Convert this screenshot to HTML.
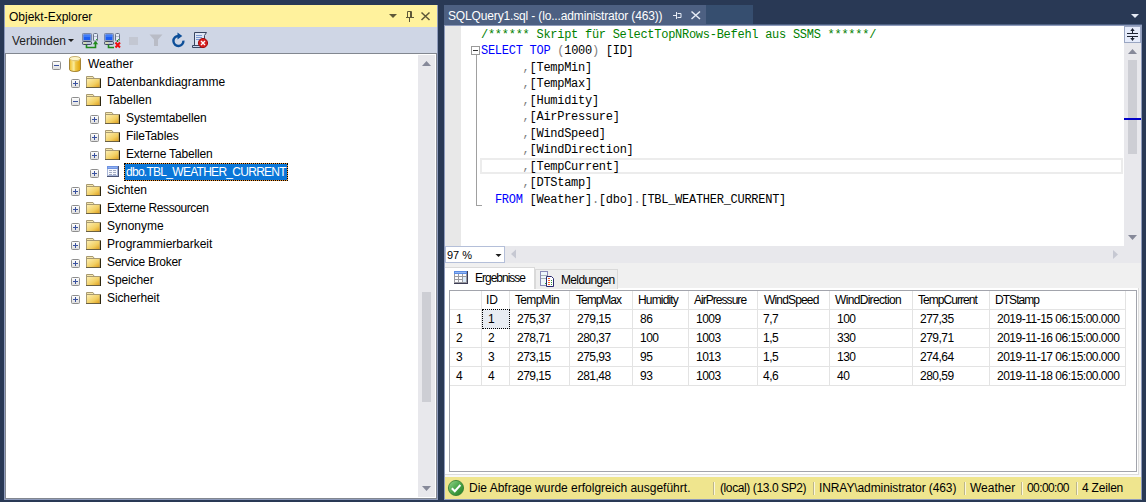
<!DOCTYPE html>
<html><head><meta charset="utf-8">
<style>
*{margin:0;padding:0;box-sizing:border-box}
html,body{width:1146px;height:502px;overflow:hidden;background:#293955;font-family:"Liberation Sans",sans-serif;font-size:12px;color:#000}
.a{position:absolute}
svg.a{overflow:visible}
.t{position:absolute;white-space:nowrap;line-height:14px}
.tr{position:absolute;height:18px;line-height:18px;white-space:nowrap;color:#000}
.code{position:absolute;font-family:"Liberation Mono",monospace;font-size:12px;letter-spacing:-0.27px;line-height:16.5px;white-space:pre;color:#000}
.cm{color:#008000}.kw{color:#0000ff}.gr{color:#808080}
.g{position:absolute;font-size:12px;line-height:13px;white-space:nowrap;color:#000}
.st{position:absolute;top:482px;line-height:12px;white-space:nowrap;color:#000}
.sep{position:absolute;top:482px;width:2px;height:13px;border-left:1px solid #bdb68a;border-right:1px solid #fbf7dc}
</style></head>
<body>
<svg width="0" height="0" style="position:absolute">
<defs>
<linearGradient id="gbox" x1="0" y1="0" x2="0" y2="1"><stop offset="0" stop-color="#ffffff"/><stop offset="1" stop-color="#dcdcdc"/></linearGradient>
<linearGradient id="gfold" x1="0" y1="0" x2="1" y2="1"><stop offset="0" stop-color="#fdf1b8"/><stop offset="0.6" stop-color="#f2cf62"/><stop offset="1" stop-color="#dc9a18"/></linearGradient>
<linearGradient id="gdb" x1="0" y1="0" x2="1" y2="0"><stop offset="0" stop-color="#eebc28"/><stop offset="0.4" stop-color="#fbeea0"/><stop offset="0.55" stop-color="#f0c848"/><stop offset="1" stop-color="#e0a208"/></linearGradient>
<linearGradient id="gchk" x1="0" y1="0" x2="1" y2="1"><stop offset="0" stop-color="#9ad68e"/><stop offset="0.5" stop-color="#4aa64a"/><stop offset="1" stop-color="#237a23"/></linearGradient>
<linearGradient id="gscr" x1="0" y1="0" x2="1" y2="0"><stop offset="0" stop-color="#2a6ee8"/><stop offset="1" stop-color="#1a4fc8"/></linearGradient>
<symbol id="plus" viewBox="0 0 9 9"><rect x="0.5" y="0.5" width="8" height="8" rx="1" fill="url(#gbox)" stroke="#8e8e8e"/><rect x="2" y="4" width="5" height="1" fill="#3a52a0"/><rect x="4" y="2" width="1" height="5" fill="#3a52a0"/></symbol>
<symbol id="minus" viewBox="0 0 9 9"><rect x="0.5" y="0.5" width="8" height="8" rx="1" fill="url(#gbox)" stroke="#8e8e8e"/><rect x="2" y="4" width="5" height="1" fill="#3a52a0"/></symbol>
<symbol id="folder" viewBox="0 0 15 12"><path d="M0.5 2V0.5h6.5l1 1.5" fill="#f7e9ad" stroke="#a89a72"/><rect x="0.5" y="2.5" width="13.5" height="9" fill="url(#gfold)" stroke="#a89a72"/><path d="M14.5 2.5v9.5h-14.5" fill="none" stroke="#2e2710"/></symbol>
<symbol id="db" viewBox="0 0 12 16"><path d="M0.5 2.5v11a5.5 2 0 0 0 11 0v-11" fill="url(#gdb)" stroke="#9c7a2a" stroke-width="0.9"/><ellipse cx="6" cy="2.6" rx="5.5" ry="2.1" fill="#fdf5c8" stroke="#b09040" stroke-width="0.7"/><path d="M1 3.2a5 1.8 0 0 0 10 0" fill="none" stroke="#f3dc88" stroke-width="0.8"/></symbol>
<symbol id="table" viewBox="0 0 12 11"><rect x="0" y="0" width="12" height="11" fill="#4c5574"/><rect x="0" y="0" width="11" height="10" fill="#a8b6d8"/><rect x="0" y="0" width="11" height="3" fill="#6e92e2"/><rect x="1" y="1" width="9" height="1" fill="#8fb0f0"/><rect x="1" y="3" width="9" height="6" fill="#f6f8fd"/><path d="M2 4.5h3M6 4.5h3M2 6.5h3M6 6.5h3M2 8.5h3M6 8.5h3" stroke="#a2abc2"/></symbol>
<symbol id="pc" viewBox="0 0 16 12"><rect x="0.5" y="0.5" width="9" height="7.5" rx="0.8" fill="#a9b9d8" stroke="#7d8aa8"/><rect x="1.5" y="1.5" width="7" height="5.5" fill="#1d5ef2"/><rect x="2" y="2" width="6" height="2" fill="#3f7cf8"/><rect x="0.5" y="8.5" width="9" height="3" rx="1" fill="#b9c3d6" stroke="#3e4860"/><rect x="1.5" y="9.5" width="3" height="1" fill="#eef08a"/><rect x="11.5" y="0.5" width="4" height="7.5" rx="1" fill="#e2eaf6" stroke="#687288"/><rect x="12" y="3" width="3" height="1" fill="#b4bccc"/><rect x="14" y="6" width="1" height="1" fill="#34b034"/></symbol>
</defs></svg>
<div class="a" style="left:4px;top:5px;width:434px;height:495px;background:#8e9bbc"></div>
<div class="a" style="left:5px;top:5px;width:432px;height:22px;background:#fff29d"></div>
<div class="t" style="left:9px;top:10px">Objekt-Explorer</div>
<svg class="a" style="left:380px;top:5px" width="57" height="22"><path d="M9 9h8l-4 4z" fill="#5e5838"/><path d="M27.5 6.5h4v6h-4z" fill="none" stroke="#5e5838"/><path d="M30.5 6.5v6" stroke="#5e5838" stroke-width="1"/><rect x="26" y="12" width="8" height="1" fill="#5e5838"/><rect x="29" y="12" width="1" height="5" fill="#5e5838"/><path d="M41.5 7.5l8 7.5M49.5 7.5l-8 7.5" stroke="#5e5838" stroke-width="1.5"/></svg>
<div class="a" style="left:5px;top:27px;width:432px;height:26px;background:#cfd6e5"></div>
<div class="t" style="left:12px;top:34px;color:#1e1e1e">Verbinden</div>
<svg class="a" style="left:60px;top:27px" width="160" height="26"><path d="M8 12h6l-3 3z" fill="#1e1e1e"/><use href="#pc" x="22" y="6" width="16" height="12"/><path d="M26.5 18v2.5h9v-5.5" fill="none" stroke="#1f8a1a" stroke-width="1.6"/><path d="M32.8 17.2h5.4l-2.7-3.2z" fill="#1f8a1a"/><use href="#pc" x="44" y="6" width="16" height="12"/><path d="M48.5 18v2.5h5.5" fill="none" stroke="#1f8a1a" stroke-width="1.6"/><rect x="57" y="13" width="1" height="2" fill="#1f8a1a"/><path d="M55.5 15.5l4.5 5M60 15.5l-4.5 5" stroke="#ee1010" stroke-width="2"/><rect x="69" y="10" width="9" height="8" fill="#c3c7d2"/><path d="M89.5 7.5h13l-4.5 5v6.5h-4v-6.5z" fill="#b9bcc6"/><path d="M118.5 9a5 5 0 1 0 4.9 4.6" fill="none" stroke="#0d4e98" stroke-width="2.4"/><path d="M117.5 5.5l4.8 3.6-4.8 3.4z" fill="#0d4e98"/><path d="M134.5 5.5h12l-2 3v10h-10z" fill="#dfe6f4" stroke="#3a4660"/><path d="M132.5 18.5h10v2h-10z" fill="#c8d4ec" stroke="#3a4660"/><path d="M136 8.5h6M136 10.5h6M136 12.5h5" stroke="#7a98d0"/><circle cx="143" cy="16" r="4.6" fill="#d81e1e" stroke="#a01010"/><path d="M141 14l4 4M145 14l-4 4" stroke="#fff" stroke-width="1.4"/></svg>
<div class="a" style="left:5px;top:53px;width:432px;height:446px;background:#fff;border:1px solid #828790"></div>
<svg class="a" style="left:52px;top:61px" width="9" height="9"><use href="#minus"/></svg>
<svg class="a" style="left:69px;top:56px" width="12" height="16"><use href="#db"/></svg>
<div class="tr" style="left:88px;top:55px;">Weather</div>
<svg class="a" style="left:71px;top:79px" width="9" height="9"><use href="#plus"/></svg>
<svg class="a" style="left:86px;top:76px" width="15" height="12"><use href="#folder"/></svg>
<div class="tr" style="left:107px;top:73px;">Datenbankdiagramme</div>
<svg class="a" style="left:71px;top:97px" width="9" height="9"><use href="#minus"/></svg>
<svg class="a" style="left:86px;top:94px" width="15" height="12"><use href="#folder"/></svg>
<div class="tr" style="left:107px;top:91px;">Tabellen</div>
<svg class="a" style="left:90px;top:115px" width="9" height="9"><use href="#plus"/></svg>
<svg class="a" style="left:105px;top:112px" width="15" height="12"><use href="#folder"/></svg>
<div class="tr" style="left:126px;top:109px;letter-spacing:-0.1px;">Systemtabellen</div>
<svg class="a" style="left:90px;top:133px" width="9" height="9"><use href="#plus"/></svg>
<svg class="a" style="left:105px;top:130px" width="15" height="12"><use href="#folder"/></svg>
<div class="tr" style="left:126px;top:127px;letter-spacing:-0.15px;">FileTables</div>
<svg class="a" style="left:90px;top:151px" width="9" height="9"><use href="#plus"/></svg>
<svg class="a" style="left:105px;top:148px" width="15" height="12"><use href="#folder"/></svg>
<div class="tr" style="left:126px;top:145px;letter-spacing:-0.17px;">Externe Tabellen</div>
<svg class="a" style="left:90px;top:169px" width="9" height="9"><use href="#plus"/></svg>
<svg class="a" style="left:107px;top:166px" width="12" height="11"><use href="#table"/></svg>
<div class="a" style="left:124px;top:163px;width:164px;height:18px;background:linear-gradient(#0a76d8,#0a76d8) padding-box,linear-gradient(#f29a3a,#f29a3a) border-box;border:1px dotted #000"></div>
<div class="tr" style="left:126px;top:163px;color:#fff;letter-spacing:-0.72px;">dbo.TBL_WEATHER_CURRENT</div>
<svg class="a" style="left:71px;top:187px" width="9" height="9"><use href="#plus"/></svg>
<svg class="a" style="left:86px;top:184px" width="15" height="12"><use href="#folder"/></svg>
<div class="tr" style="left:107px;top:181px;">Sichten</div>
<svg class="a" style="left:71px;top:205px" width="9" height="9"><use href="#plus"/></svg>
<svg class="a" style="left:86px;top:202px" width="15" height="12"><use href="#folder"/></svg>
<div class="tr" style="left:107px;top:199px;letter-spacing:-0.4px;">Externe Ressourcen</div>
<svg class="a" style="left:71px;top:223px" width="9" height="9"><use href="#plus"/></svg>
<svg class="a" style="left:86px;top:220px" width="15" height="12"><use href="#folder"/></svg>
<div class="tr" style="left:107px;top:217px;">Synonyme</div>
<svg class="a" style="left:71px;top:241px" width="9" height="9"><use href="#plus"/></svg>
<svg class="a" style="left:86px;top:238px" width="15" height="12"><use href="#folder"/></svg>
<div class="tr" style="left:107px;top:235px;">Programmierbarkeit</div>
<svg class="a" style="left:71px;top:259px" width="9" height="9"><use href="#plus"/></svg>
<svg class="a" style="left:86px;top:256px" width="15" height="12"><use href="#folder"/></svg>
<div class="tr" style="left:107px;top:253px;letter-spacing:-0.3px;">Service Broker</div>
<svg class="a" style="left:71px;top:277px" width="9" height="9"><use href="#plus"/></svg>
<svg class="a" style="left:86px;top:274px" width="15" height="12"><use href="#folder"/></svg>
<div class="tr" style="left:107px;top:271px;letter-spacing:-0.1px;">Speicher</div>
<svg class="a" style="left:71px;top:295px" width="9" height="9"><use href="#plus"/></svg>
<svg class="a" style="left:86px;top:292px" width="15" height="12"><use href="#folder"/></svg>
<div class="tr" style="left:107px;top:289px;letter-spacing:-0.1px;">Sicherheit</div>
<div class="a" style="left:418px;top:55px;width:17px;height:442px;background:#e8e8ec"></div>
<div class="a" style="left:422px;top:292px;width:9px;height:110px;background:#cdced4"></div>
<svg class="a" style="left:418px;top:55px" width="17" height="442"><path d="M4 11h9l-4.5-5z" fill="#868999"/><path d="M4 431h9l-4.5 5z" fill="#868999"/></svg>
<div class="a" style="left:444px;top:5px;width:262px;height:20px;background:#4d6082"></div>
<div class="a" style="left:706px;top:5px;width:47px;height:19px;background:#364e6f"></div>
<div class="t" style="left:448px;top:9px;color:#fff;letter-spacing:-0.15px">SQLQuery1.sql - (lo...administrator (463))</div>
<svg class="a" style="left:670px;top:8px" width="36" height="14"><path d="M3 7.5h3.5" stroke="#e6ebf5" stroke-width="1"/><rect x="6" y="4" width="1" height="7" fill="#e6ebf5"/><path d="M7.5 5.5h3.5v4h-3.5" fill="none" stroke="#e6ebf5"/><path d="M21.5 3.5l8.5 7.5M30 3.5l-8.5 7.5" stroke="#e6ebf5" stroke-width="1.5"/></svg>
<svg class="a" style="left:1126px;top:8px" width="16" height="14"><path d="M5 6h8l-4 4z" fill="#e6ebf5"/></svg>
<div class="a" style="left:444px;top:24px;width:698px;height:2px;background:#4d6082"></div>
<div class="a" style="left:444px;top:25px;width:698px;height:475px;background:#8e9bbc"></div>
<div class="a" style="left:445px;top:26px;width:696px;height:220px;background:#fff"></div>
<div class="a" style="left:445px;top:26px;width:16px;height:220px;background:#e8e8e8"></div>
<div class="a" style="left:480px;top:158px;width:643px;height:16px;border:2px solid #ececec"></div>
<svg class="a" style="left:470px;top:45px" width="14" height="165"><rect x="1.5" y="1.5" width="8" height="8" fill="#fff" stroke="#9a9a9a"/><rect x="3" y="5" width="5" height="1" fill="#333"/><rect x="6" y="10" width="1" height="151" fill="#a0a0a0"/><rect x="6" y="160" width="6" height="1" fill="#a0a0a0"/></svg>
<div class="a" style="left:1124px;top:26px;width:17px;height:220px;background:#e8e8ec"></div>
<div class="a" style="left:1124px;top:26px;width:17px;height:17px;background:#e6ecfb;border:1px solid #9aa6c2"></div>
<svg class="a" style="left:1124px;top:26px" width="17" height="220"><rect x="3" y="7" width="11" height="1" fill="#1e2433"/><rect x="3" y="10" width="11" height="1" fill="#1e2433"/><rect x="8" y="4" width="1" height="3" fill="#1e2433"/><path d="M6.3 5h4.4l-2.2-3z" fill="#1e2433"/><rect x="8" y="11" width="1" height="2.5" fill="#1e2433"/><path d="M6.3 12h4.4l-2.2 3z" fill="#1e2433"/><path d="M4 28h9l-4.5-5z" fill="#868999"/><rect x="4" y="34" width="9" height="94" fill="#cdced4"/><rect x="0" y="92" width="17" height="2" fill="#0000c8"/><path d="M4 209h9l-4.5 5z" fill="#868999"/></svg>
<div class="code" style="left:481px;top:26.7px"><span class="cm">/****** Skript für SelectTopNRows-Befehl aus SSMS ******/</span>
<span class="kw">SELECT</span> <span class="kw">TOP</span> <span class="gr">(</span>1000<span class="gr">)</span> [ID]
      <span class="gr">,</span>[TempMin]
      <span class="gr">,</span>[TempMax]
      <span class="gr">,</span>[Humidity]
      <span class="gr">,</span>[AirPressure]
      <span class="gr">,</span>[WindSpeed]
      <span class="gr">,</span>[WindDirection]
      <span class="gr">,</span>[TempCurrent]
      <span class="gr">,</span>[DTStamp]
  <span class="kw">FROM</span> [Weather]<span class="gr">.</span>[dbo]<span class="gr">.</span>[TBL_WEATHER_CURRENT]</div>
<div class="a" style="left:445px;top:246px;width:696px;height:17px;background:#e8e8ec"></div>
<div class="a" style="left:445px;top:246px;width:60px;height:17px;background:#fff;border:1px solid #b4bfd9"></div>
<div class="t" style="left:447px;top:248px;font-size:11px">97 %</div>
<svg class="a" style="left:444px;top:246px" width="680" height="17"><path d="M51.5 8h6l-3 3z" fill="#1e1e1e"/><path d="M72 3.5v9l-5-4.5z" fill="#c6c8d2"/><path d="M669 4v9l5-4.5z" fill="#c6c8d2"/></svg>
<div class="a" style="left:445px;top:263px;width:696px;height:214px;background:#f0f0f0"></div>
<div class="a" style="left:445px;top:288px;width:696px;height:189px;background:#fff"></div>
<div class="a" style="left:1138px;top:288px;width:1px;height:187px;background:#dcdcdc"></div>
<div class="a" style="left:1139px;top:288px;width:2px;height:189px;background:#f4f4f4"></div>
<div class="a" style="left:445px;top:474px;width:694px;height:1px;background:#dcdcdc"></div>
<div class="a" style="left:445px;top:475px;width:696px;height:2px;background:#f8f8f8"></div>
<div class="a" style="left:445px;top:267px;width:90px;height:22px;background:#fff;border-top:1px solid #dadada;border-right:1px solid #dadada"></div>
<div class="a" style="left:535px;top:269px;width:83px;height:20px;background:#eeeeee;border:1px solid #d9d9d9;border-bottom:none"></div>
<div class="g" style="left:475px;top:272px;font-size:12px;line-height:13px;letter-spacing:-1.0px">Ergebnisse</div>
<div class="g" style="left:561px;top:274px;font-size:12px;line-height:13px;letter-spacing:-0.65px">Meldungen</div>
<svg class="a" style="left:454px;top:271px" width="14" height="13"><rect x="0" y="0" width="14" height="13" fill="#3c3c54"/><rect x="0" y="0" width="13" height="12" fill="#9a9aa0"/><rect x="0" y="0" width="13" height="3" fill="#5b8be2"/><rect x="1" y="1" width="11" height="1" fill="#92b6f2"/><path d="M1 4h3M5 4h3M9 4h3M1 7h3M5 7h3M9 7h3M1 10h3M5 10h3M9 10h3" stroke="#fbfbfd" stroke-width="2"/><rect x="9" y="6" width="3" height="5" fill="#dcecfa"/></svg>
<svg class="a" style="left:540px;top:271px" width="15" height="16"><rect x="0.5" y="0.5" width="7" height="14" fill="#eef6fb" stroke="#8a8ab8"/><path d="M1 4.5h6M1 7.5h6" stroke="#a8b0b8"/><rect x="5" y="12" width="1" height="1" fill="#3a3"/><path d="M6.5 5.5h5l2 2v8h-7z" fill="#fff" stroke="#2a2a70"/><path d="M8 7.5h2M8 9.5h2M8 11.5h2M8 13.5h2" stroke="#f4602a"/><path d="M11 9.5h1M11 11.5h1M11 13.5h1" stroke="#2f8f3a"/></svg>
<div class="a" style="left:449px;top:290px;width:688px;height:182px;border:1px solid #a2a4ac"></div>
<div class="a" style="left:481px;top:291px;width:1px;height:95px;background:#e3e3e3"></div>
<div class="a" style="left:509px;top:291px;width:1px;height:95px;background:#e3e3e3"></div>
<div class="a" style="left:569px;top:291px;width:1px;height:95px;background:#e3e3e3"></div>
<div class="a" style="left:632px;top:291px;width:1px;height:95px;background:#e3e3e3"></div>
<div class="a" style="left:688px;top:291px;width:1px;height:95px;background:#e3e3e3"></div>
<div class="a" style="left:757px;top:291px;width:1px;height:95px;background:#e3e3e3"></div>
<div class="a" style="left:829px;top:291px;width:1px;height:95px;background:#e3e3e3"></div>
<div class="a" style="left:912px;top:291px;width:1px;height:95px;background:#e3e3e3"></div>
<div class="a" style="left:989px;top:291px;width:1px;height:95px;background:#e3e3e3"></div>
<div class="a" style="left:1125px;top:291px;width:1px;height:95px;background:#e3e3e3"></div>
<div class="a" style="left:450px;top:309px;width:676px;height:1px;background:#e3e3e3"></div>
<div class="a" style="left:450px;top:328px;width:676px;height:1px;background:#e3e3e3"></div>
<div class="a" style="left:450px;top:347px;width:676px;height:1px;background:#e3e3e3"></div>
<div class="a" style="left:450px;top:366px;width:676px;height:1px;background:#e3e3e3"></div>
<div class="a" style="left:450px;top:385px;width:676px;height:1px;background:#e3e3e3"></div>
<div class="a" style="left:482px;top:309px;width:28px;height:20px;background:#e8ecf2;border:1px dotted #000"></div>
<div class="g" style="left:486px;top:294px;letter-spacing:-0.2px">ID</div>
<div class="g" style="left:515px;top:294px;letter-spacing:-0.68px">TempMin</div>
<div class="g" style="left:576px;top:294px;letter-spacing:-1.0px">TempMax</div>
<div class="g" style="left:638px;top:294px;letter-spacing:-0.84px">Humidity</div>
<div class="g" style="left:694px;top:294px;letter-spacing:-0.96px">AirPressure</div>
<div class="g" style="left:764px;top:294px;letter-spacing:-0.84px">WindSpeed</div>
<div class="g" style="left:835px;top:294px;letter-spacing:-0.675px">WindDirection</div>
<div class="g" style="left:918px;top:294px;letter-spacing:-0.95px">TempCurrent</div>
<div class="g" style="left:995px;top:294px;letter-spacing:-0.95px">DTStamp</div>
<div class="g" style="left:456px;top:313px;letter-spacing:-0.5px">1</div>
<div class="g" style="left:488px;top:313px;letter-spacing:-0.5px">1</div>
<div class="g" style="left:517px;top:313px;letter-spacing:-0.5px">275,37</div>
<div class="g" style="left:577px;top:313px;letter-spacing:-0.5px">279,15</div>
<div class="g" style="left:640px;top:313px;letter-spacing:-0.5px">86</div>
<div class="g" style="left:696px;top:313px;letter-spacing:-0.5px">1009</div>
<div class="g" style="left:763px;top:313px;letter-spacing:-0.5px">7,7</div>
<div class="g" style="left:837px;top:313px;letter-spacing:-0.5px">100</div>
<div class="g" style="left:920px;top:313px;letter-spacing:-0.5px">277,35</div>
<div class="g" style="left:997px;top:313px;letter-spacing:-0.5px">2019-11-15 06:15:00.000</div>
<div class="g" style="left:456px;top:332px;letter-spacing:-0.5px">2</div>
<div class="g" style="left:488px;top:332px;letter-spacing:-0.5px">2</div>
<div class="g" style="left:517px;top:332px;letter-spacing:-0.5px">278,71</div>
<div class="g" style="left:577px;top:332px;letter-spacing:-0.5px">280,37</div>
<div class="g" style="left:640px;top:332px;letter-spacing:-0.5px">100</div>
<div class="g" style="left:696px;top:332px;letter-spacing:-0.5px">1003</div>
<div class="g" style="left:763px;top:332px;letter-spacing:-0.5px">1,5</div>
<div class="g" style="left:837px;top:332px;letter-spacing:-0.5px">330</div>
<div class="g" style="left:920px;top:332px;letter-spacing:-0.5px">279,71</div>
<div class="g" style="left:997px;top:332px;letter-spacing:-0.5px">2019-11-16 06:15:00.000</div>
<div class="g" style="left:456px;top:351px;letter-spacing:-0.5px">3</div>
<div class="g" style="left:488px;top:351px;letter-spacing:-0.5px">3</div>
<div class="g" style="left:517px;top:351px;letter-spacing:-0.5px">273,15</div>
<div class="g" style="left:577px;top:351px;letter-spacing:-0.5px">275,93</div>
<div class="g" style="left:640px;top:351px;letter-spacing:-0.5px">95</div>
<div class="g" style="left:696px;top:351px;letter-spacing:-0.5px">1013</div>
<div class="g" style="left:763px;top:351px;letter-spacing:-0.5px">1,5</div>
<div class="g" style="left:837px;top:351px;letter-spacing:-0.5px">130</div>
<div class="g" style="left:920px;top:351px;letter-spacing:-0.5px">274,64</div>
<div class="g" style="left:997px;top:351px;letter-spacing:-0.5px">2019-11-17 06:15:00.000</div>
<div class="g" style="left:456px;top:370px;letter-spacing:-0.5px">4</div>
<div class="g" style="left:488px;top:370px;letter-spacing:-0.5px">4</div>
<div class="g" style="left:517px;top:370px;letter-spacing:-0.5px">279,15</div>
<div class="g" style="left:577px;top:370px;letter-spacing:-0.5px">281,48</div>
<div class="g" style="left:640px;top:370px;letter-spacing:-0.5px">93</div>
<div class="g" style="left:696px;top:370px;letter-spacing:-0.5px">1003</div>
<div class="g" style="left:763px;top:370px;letter-spacing:-0.5px">4,6</div>
<div class="g" style="left:837px;top:370px;letter-spacing:-0.5px">40</div>
<div class="g" style="left:920px;top:370px;letter-spacing:-0.5px">280,59</div>
<div class="g" style="left:997px;top:370px;letter-spacing:-0.5px">2019-11-18 06:15:00.000</div>
<div class="a" style="left:445px;top:477px;width:696px;height:22px;background:#efe58e"></div>
<div class="a" style="left:444px;top:499px;width:698px;height:1px;background:#8e9bbc"></div>
<svg class="a" style="left:447px;top:479px" width="18" height="18"><circle cx="9" cy="9" r="7.6" fill="url(#gchk)" stroke="#2f7a2f" stroke-width="0.8"/><path d="M4.8 9.2l3 3 5.6-6.2" fill="none" stroke="#fff" stroke-width="2"/></svg>
<div class="st" style="left:469px">Die Abfrage wurde erfolgreich ausgeführt.</div>
<div class="sep" style="left:713px"></div>
<div class="sep" style="left:813px"></div>
<div class="sep" style="left:964px"></div>
<div class="sep" style="left:1021px"></div>
<div class="sep" style="left:1076px"></div>
<div class="st" style="left:720px;letter-spacing:-0.4px">(local) (13.0 SP2)</div>
<div class="st" style="left:819px;letter-spacing:-0.1px">INRAY\administrator (463)</div>
<div class="st" style="left:970px">Weather</div>
<div class="st" style="left:1027px;letter-spacing:-0.6px">00:00:00</div>
<div class="st" style="left:1082px;letter-spacing:-0.2px">4 Zeilen</div>
</body></html>
